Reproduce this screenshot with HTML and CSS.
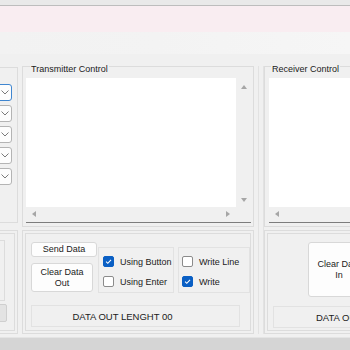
FILE: index.html
```html
<!DOCTYPE html>
<html lang="en">
<head>
    <meta charset="UTF-8">
    <meta name="viewport" content="width=device-width, initial-scale=1.0">
    <title>Serial Monitor</title>
    <link rel="stylesheet" href="styles.css">
</head>
<body>
    <div class="window">
        <div class="titlebar"></div>
        <div class="banner"></div>
        <div class="toolbar"></div>

        <div class="content">
            <!-- port settings, mostly off screen -->
            <div class="col col-left">
                <div class="panel settings">
                    <div class="combo is-focused"><svg class="chev" viewBox="0 0 8 5"><polyline points="0.5,0.5 4,4 7.5,0.5"/></svg></div>
                    <div class="combo"><svg class="chev" viewBox="0 0 8 5"><polyline points="0.5,0.5 4,4 7.5,0.5"/></svg></div>
                    <div class="combo"><svg class="chev" viewBox="0 0 8 5"><polyline points="0.5,0.5 4,4 7.5,0.5"/></svg></div>
                    <div class="combo"><svg class="chev" viewBox="0 0 8 5"><polyline points="0.5,0.5 4,4 7.5,0.5"/></svg></div>
                    <div class="combo"><svg class="chev" viewBox="0 0 8 5"><polyline points="0.5,0.5 4,4 7.5,0.5"/></svg></div>
                </div>
                <div class="panel bottom-panel">
                    <div class="panel-inner left-inner">
                        <div class="blank-box"></div>
                        <div class="gray-btn"></div>
                    </div>
                </div>
            </div>

            <!-- transmitter -->
            <div class="col col-tx">
                <div class="group">
                    <div class="group-title">Transmitter Control</div>
                    <div class="textbox">
                        <div class="text-area"></div>
                        <div class="vscroll">
                            <svg class="arrow" viewBox="0 0 6 4"><polygon points="0,4 3,0 6,4"/></svg>
                            <svg class="arrow" viewBox="0 0 6 4"><polygon points="0,0 6,0 3,4"/></svg>
                        </div>
                        <div class="hscroll">
                            <svg class="arrow-h" viewBox="0 0 4 6"><polygon points="4,0 4,6 0,3"/></svg>
                            <svg class="arrow-h" viewBox="0 0 4 6"><polygon points="0,0 4,3 0,6"/></svg>
                        </div>
                        <div class="corner"></div>
                    </div>
                </div>

                <div class="panel bottom-panel">
                    <div class="panel-inner tx-inner">
                        <div class="tx-row">
                            <div class="btn-stack">
                                <button class="btn btn-send">Send Data</button>
                                <button class="btn btn-clear">Clear Data<br>Out</button>
                            </div>
                            <div class="check-box check-box-a">
                                <label class="check"><span class="tick is-checked"><svg viewBox="0 0 10 10"><polyline points="2.3,5.2 4.2,7 7.8,3.2"/></svg></span>Using Button</label>
                                <label class="check"><span class="tick"></span>Using Enter</label>
                            </div>
                            <div class="check-box check-box-b">
                                <label class="check"><span class="tick"></span>Write Line</label>
                                <label class="check"><span class="tick is-checked"><svg viewBox="0 0 10 10"><polyline points="2.3,5.2 4.2,7 7.8,3.2"/></svg></span>Write</label>
                            </div>
                        </div>
                        <div class="length-box tx-length">DATA OUT LENGHT 00</div>
                    </div>
                </div>
            </div>

            <div class="splitter"></div>

            <!-- receiver -->
            <div class="col col-rx">
                <div class="group">
                    <div class="group-title">Receiver Control</div>
                    <div class="textbox">
                        <div class="text-area"></div>
                        <div class="hscroll">
                            <svg class="arrow-h" viewBox="0 0 4 6"><polygon points="4,0 4,6 0,3"/></svg>
                        </div>
                    </div>
                </div>

                <div class="panel bottom-panel">
                    <div class="panel-inner rx-inner">
                        <button class="btn btn-clear-in">Clear Data<br>In</button>
                        <div class="length-box rx-length">DATA OUT LENGHT 00</div>
                    </div>
                </div>
            </div>
        </div>

        <div class="statusbar"></div>
    </div>
</body>
</html>
```

FILE: styles.css
```css
* {
    box-sizing: border-box;
}

body {
    margin: 0;
    font-family: "Liberation Sans", Arial, sans-serif;
    font-size: 9px;
    color: #1b1b1b;
    background: #f0f0f0;
}

.window {
    width: 350px;
    height: 350px;
    overflow: hidden;
    display: flex;
    flex-direction: column;
}

.titlebar {
    height: 6px;
    background: #e9e9e9;
    border-bottom: 1px solid #bdbdbd;
}

.banner {
    height: 26px;
    background: #f9edf1;
}

.toolbar {
    height: 22px;
    background: linear-gradient(to right, #f2f2f2, #f3f3f3 45%, #f6f6f6);
}

.content {
    flex: 1;
    display: flex;
    min-height: 0;
}

.statusbar {
    height: 13px;
    background: #d5d5d5;
    border-top: 1px solid #e4e4e4;
}

/* columns */

.col {
    display: flex;
    flex-direction: column;
    flex-shrink: 0;
    padding-top: 12px;
}

.col-left {
    width: 18px;
    margin-right: 4px;
    overflow: hidden;
    align-items: flex-end;
    padding-top: 13px;
}

.col-tx {
    width: 232px;
}

.splitter {
    flex-shrink: 0;
    width: 6px;
    margin: 12px 0 3px 4px;
    border-left: 1px solid #e2e2e2;
    border-right: 1px solid #e2e2e2;
}

.col-rx {
    width: 120px;
}

/* panels and groups */

.panel {
    border: 1px solid #dcdcdc;
    flex-shrink: 0;
}

.settings {
    width: 120px;
    height: 156px;
    padding: 16px 5px 0 0;
    display: flex;
    flex-direction: column;
    align-items: flex-end;
    gap: 4px;
}

.combo {
    width: 90px;
    height: 17px;
    flex-shrink: 0;
    background: #fdfdfd;
    border: 1px solid #b4b4b4;
    border-radius: 3px;
    display: flex;
    align-items: center;
    justify-content: flex-end;
    padding-right: 2px;
}

.combo.is-focused {
    border-color: #3f86d0;
}

.chev {
    width: 8px;
    height: 5px;
    fill: none;
    stroke: #7a7a7a;
    stroke-width: 1;
}

.bottom-panel {
    height: 104px;
    padding: 2px;
    margin-top: 3px;
}

.col-left .bottom-panel {
    width: 120px;
    margin-top: 7px;
}

.panel-inner {
    height: 100%;
    border: 1px solid #dcdcdc;
}

.left-inner {
    padding: 6px 9px 0 0;
    display: flex;
    flex-direction: column;
    align-items: flex-end;
    gap: 3px;
}

.blank-box {
    width: 90px;
    height: 61px;
    border: 1px solid #dcdcdc;
}

.gray-btn {
    width: 90px;
    height: 18px;
    margin-right: -2px;
    background: #e3e3e3;
    border: 1px solid #cfcfcf;
    border-radius: 2px;
}

.group {
    border: 1px solid #dcdcdc;
    height: 161px;
    padding: 0 2px 3px 3px;
}

.group-title {
    width: fit-content;
    margin: -3px 0 0 4px;
    padding: 0 1px;
    line-height: 11px;
    background: #f0f0f0;
}

.col-rx .group-title {
    margin-left: 2px;
}

.col-rx .group {
    padding-left: 4px;
}

.textbox {
    margin-top: 3px;
    display: grid;
    grid-template-columns: 1fr 15px;
    grid-template-rows: 129px 15px;
    border-bottom: 1px solid #7d7d7d;
}

.col-rx .textbox {
    grid-template-columns: 1fr;
}

.text-area {
    background: #ffffff;
}

.vscroll {
    background: #f0f0f0;
    display: flex;
    flex-direction: column;
    justify-content: space-between;
    align-items: center;
    padding: 7px 0 5px;
}

.hscroll {
    background: #f0f0f0;
    display: flex;
    justify-content: space-between;
    align-items: center;
    padding: 0 6px 2px 6px;
}

.corner {
    background: #f0f0f0;
}

.arrow {
    width: 6px;
    height: 4px;
    fill: #a6a6a6;
}

.arrow-h {
    width: 4px;
    height: 6px;
    fill: #a6a6a6;
}

/* transmitter controls */

.tx-inner {
    padding: 8px 0 0 5px;
}

.tx-row {
    display: flex;
    height: 50px;
}

.btn {
    font: inherit;
    color: #1b1b1b;
    padding: 0;
    background: #fdfdfd;
    border: 1px solid #d8d8d8;
    border-radius: 3px;
    line-height: 11px;
    text-align: center;
}

.btn-stack {
    width: 66px;
    display: flex;
    flex-direction: column;
    align-items: flex-start;
    gap: 6px;
}

.btn-send {
    width: 66px;
    height: 15px;
}

.btn-clear {
    width: 62px;
    height: 29px;
}

.check-box {
    margin-top: 5px;
    height: 46px;
    border: 1px solid #e2e2e2;
    display: flex;
    flex-direction: column;
    gap: 9px;
    padding: 8px 0 0 4px;
}

.check-box-a {
    width: 77px;
    margin-left: 1px;
}

.check-box-b {
    width: 73px;
    margin-left: 4px;
    padding-left: 3px;
}

.check {
    display: flex;
    align-items: center;
    gap: 6px;
    height: 11px;
}

.tick {
    width: 11px;
    height: 11px;
    border: 1px solid #8b8b8b;
    border-radius: 2px;
    background: #ffffff;
    display: flex;
}

.tick.is-checked {
    background: #0a5fc4;
    border-color: #0a5fc4;
}

.tick svg {
    width: 9px;
    height: 9px;
    fill: none;
    stroke: #ffffff;
    stroke-width: 1.2;
}

.length-box {
    margin-top: 13px;
    height: 22px;
    border: 1px solid #e2e2e2;
    line-height: 21px;
    font-size: 9.5px;
    white-space: nowrap;
}

.tx-length {
    width: 209px;
    padding-right: 26px;
    text-align: center;
}

/* receiver controls */

.rx-inner {
    padding: 8px 0 0 5px;
    display: flex;
    flex-direction: column;
}

.btn-clear-in {
    width: 62px;
    height: 55px;
    margin-left: 35px;
}

.rx-length {
    margin-top: 9px;
    width: 200px;
    padding-left: 42px;
}
```
